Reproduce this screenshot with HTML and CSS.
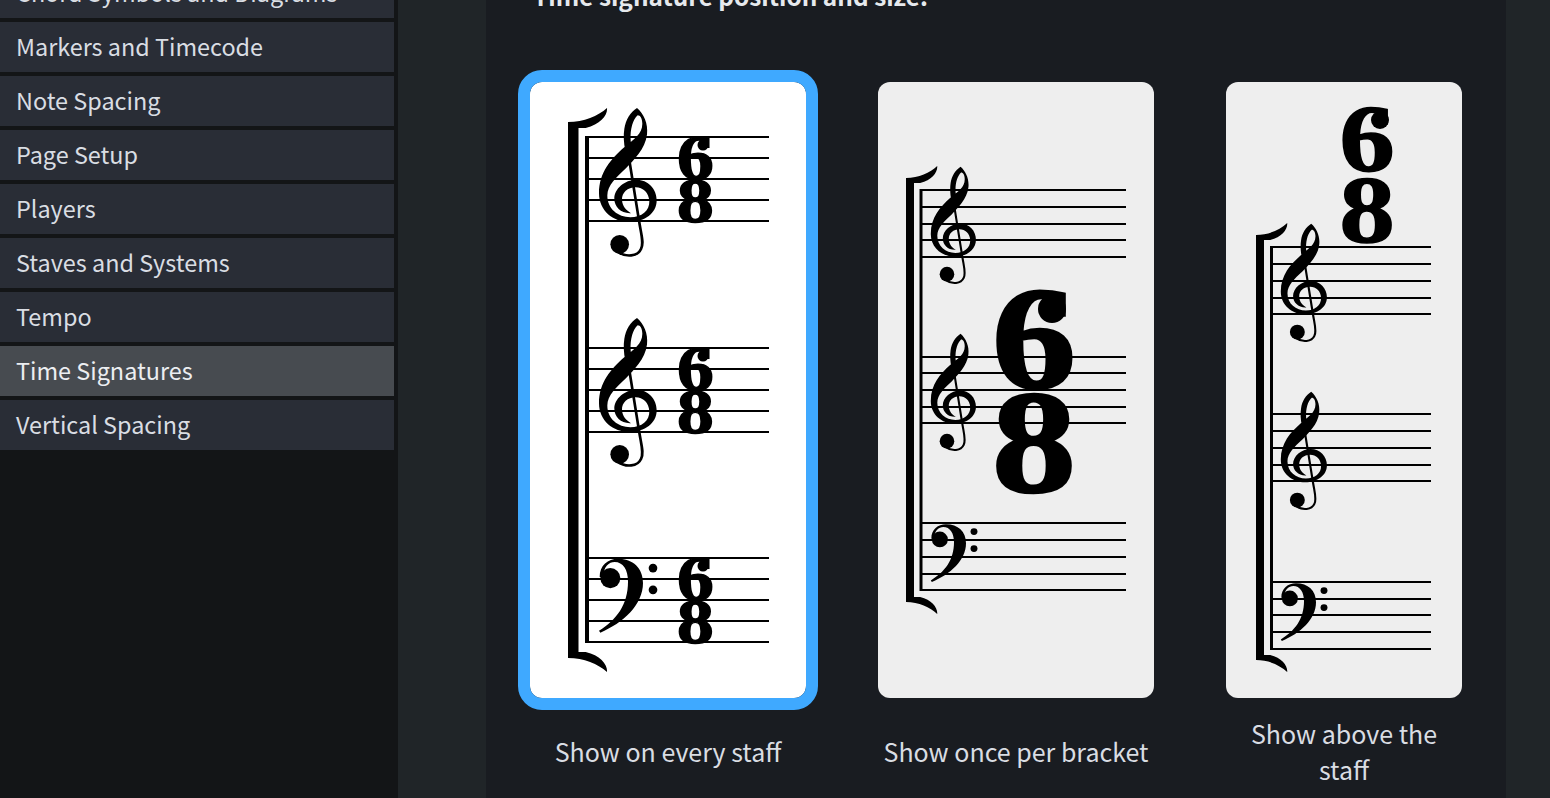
FILE: index.html
```html
<!DOCTYPE html>
<html lang="en">
<head>
<meta charset="utf-8">
<title>Engraving Options</title>
<link rel="stylesheet" href="styles.css">
</head>
<body>
<svg class="sprite" aria-hidden="true">
  <symbol id="treble" viewBox="265 140 180 452" preserveAspectRatio="none">
    <path d="M382 143C402 160 416 190 412 222C407 266 372 298 348 324C320 350 293 374 293 405C293 445 325 470 362 470C396 470 420 450 419 422C418 396 400 380 378 380C354 380 336 396 337 418C338 438 350 450 364 458C335 460 314 440 314 415C314 385 345 358 380 358C415 358 441 385 441 420C441 458 405 484 360 484C310 484 268 450 268 398C268 335 305 295 342 262C372 236 398 222 398 190C398 175 392 165 384 165C370 178 361 205 363 240L365 262L347 272C342 245 341 225 344 205C348 178 362 156 382 143Z"/>
    <path class="stem" d="M353 262L388 480C394 520 404 548 394 565C384 587 350 592 322 572"/>
    <circle cx="330" cy="551" r="28"/>
  </symbol>
  <symbol id="bass" viewBox="115 52 180 230" preserveAspectRatio="none">
    <path d="M120 112C120 76 145 57 175 57C220 57 250 85 250 130C250 195 190 250 122 278L118 272C170 240 205 195 205 125C205 90 190 67 165 67C148 67 132 80 130 112Z"/>
    <circle cx="152" cy="115" r="30"/>
    <circle cx="280" cy="85" r="13"/>
    <circle cx="280" cy="150" r="13"/>
  </symbol>
  <symbol id="bracket-top" viewBox="0 0 40 20" preserveAspectRatio="none">
    <path d="M0 14C16 14 30 8 39 0C40 8 30 20 10 21L10 20H0Z"/>
  </symbol>
  <symbol id="bracket-bottom" viewBox="0 0 40 20" preserveAspectRatio="none">
    <path d="M0 6C16 6 30 12 39 20C40 12 30 0 10 -1L10 0H0Z"/>
  </symbol>
</svg>

<aside class="sidebar">
  <ul class="nav">
    <li class="nav-item">Chord Symbols and Diagrams</li>
    <li class="nav-item">Markers and Timecode</li>
    <li class="nav-item">Note Spacing</li>
    <li class="nav-item">Page Setup</li>
    <li class="nav-item">Players</li>
    <li class="nav-item">Staves and Systems</li>
    <li class="nav-item">Tempo</li>
    <li class="nav-item active">Time Signatures</li>
    <li class="nav-item">Vertical Spacing</li>
  </ul>
</aside>

<main class="main">
  <section class="panel">
    <h2 class="heading">Time signature position and size:</h2>
    <div class="options">

      <figure class="option wide">
        <div class="card selected">
          <svg class="score" width="276" height="616" viewBox="530 82 276 616">
            <rect x="568" y="122" width="10.5" height="535"/>
            <use href="#bracket-top" x="568" y="108" width="40" height="20"/>
            <use href="#bracket-bottom" x="568" y="652" width="40" height="20"/>
            <rect x="585" y="136" width="4" height="507"/>
            <path class="staff" d="M589 137H769M589 158H769M589 179H769M589 200H769M589 221H769"/>
            <path class="staff" d="M589 348H769M589 369H769M589 390H769M589 411H769M589 432H769"/>
            <path class="staff" d="M589 558H769M589 579H769M589 600H769M589 621H769M589 642H769"/>
            <use href="#treble" x="598" y="107" width="60" height="151"/>
            <use href="#treble" x="598" y="317" width="60" height="151"/>
            <use href="#bass" x="598" y="557" width="60" height="77"/>
            <text class="digit d-small" transform="translate(695.5 178.5) scale(1.15 1)">6</text>
            <circle cx="703" cy="145" r="5.5"/>
            <text class="digit d-small" transform="translate(695.5 221.5) scale(1.15 1)">8</text>
            <text class="digit d-small" transform="translate(695.5 389.5) scale(1.15 1)">6</text>
            <circle cx="703" cy="356" r="5.5"/>
            <text class="digit d-small" transform="translate(695.5 432.5) scale(1.15 1)">8</text>
            <text class="digit d-small" transform="translate(695.5 599.5) scale(1.15 1)">6</text>
            <circle cx="703" cy="566" r="5.5"/>
            <text class="digit d-small" transform="translate(695.5 642.5) scale(1.15 1)">8</text>
          </svg>
        </div>
        <figcaption class="caption">Show on every staff</figcaption>
      </figure>

      <figure class="option wide">
        <div class="card">
          <svg class="score" width="276" height="616" viewBox="878 82 276 616">
            <rect x="906" y="178" width="8" height="423"/>
            <use href="#bracket-top" x="906" y="166" width="32" height="17"/>
            <use href="#bracket-bottom" x="906" y="597" width="32" height="17"/>
            <rect x="919.5" y="189" width="3" height="402"/>
            <path class="staff" d="M922 190H1126M922 207H1126M922 224H1126M922 240H1126M922 257H1126"/>
            <path class="staff" d="M922 357H1126M922 373H1126M922 390H1126M922 407H1126M922 423H1126"/>
            <path class="staff" d="M922 523H1126M922 540H1126M922 557H1126M922 574H1126M922 590H1126"/>
            <use href="#treble" x="930" y="166" width="47" height="119"/>
            <use href="#treble" x="930" y="333" width="47" height="119"/>
            <use href="#bass" x="930" y="523" width="48" height="60"/>
            <text class="digit d-large" transform="translate(1034 388) scale(1.15 1)">6</text>
            <circle cx="1052" cy="309" r="14"/>
            <text class="digit d-large" transform="translate(1034 492) scale(1.15 1)">8</text>
          </svg>
        </div>
        <figcaption class="caption">Show once per bracket</figcaption>
      </figure>

      <figure class="option narrow">
        <div class="card">
          <svg class="score" width="236" height="616" viewBox="1226 82 236 616">
            <rect x="1256" y="235" width="8" height="425"/>
            <use href="#bracket-top" x="1256" y="223" width="32" height="17"/>
            <use href="#bracket-bottom" x="1256" y="655" width="32" height="17"/>
            <rect x="1270" y="246" width="3" height="404"/>
            <path class="staff" d="M1273 247H1431M1273 264H1431M1273 281H1431M1273 298H1431M1273 314H1431"/>
            <path class="staff" d="M1273 414H1431M1273 431H1431M1273 448H1431M1273 465H1431M1273 481H1431"/>
            <path class="staff" d="M1273 582H1431M1273 599H1431M1273 615H1431M1273 632H1431M1273 649H1431"/>
            <use href="#treble" x="1280" y="223" width="48" height="120"/>
            <use href="#treble" x="1280" y="391" width="48" height="120"/>
            <use href="#bass" x="1280" y="582" width="48" height="60"/>
            <text class="digit d-mid" transform="translate(1367 171) scale(1.15 1)">6</text>
            <circle cx="1380" cy="120" r="9"/>
            <text class="digit d-mid" transform="translate(1367 242) scale(1.15 1)">8</text>
          </svg>
        </div>
        <figcaption class="caption caption-narrow">Show above the staff</figcaption>
      </figure>

    </div>
  </section>
</main>
</body>
</html>
```

FILE: styles.css
```css
* { box-sizing: border-box; }

html, body {
  margin: 0;
  height: 798px;
  overflow: hidden;
}

body {
  display: flex;
  background: #202528;
  color: #d9dde3;
  font-family: "Noto Sans CJK SC", "Noto Sans", sans-serif;
}

.sprite {
  position: absolute;
  width: 0;
  height: 0;
}

.sidebar {
  flex: 0 0 398px;
  height: 798px;
  padding-right: 4px;
  background: #131517;
  overflow: hidden;
}

.nav {
  list-style: none;
  margin: -32px 0 0;
  padding: 0;
  display: flex;
  flex-direction: column;
  gap: 4px;
}

.nav-item {
  height: 50px;
  padding: 0 0 2px 16px;
  display: flex;
  align-items: center;
  background: #292d36;
  font-size: 23.4px;
  line-height: 36px;
}

.nav-item.active {
  background: #474b50;
  color: #eceef1;
}

.main {
  flex: 1;
  padding: 0 44px 0 88px;
  height: 798px;
  overflow: hidden;
}

.panel {
  height: 838px;
  margin-top: -40px;
  padding: 0 32px;
  background: #191c21;
}

.heading {
  margin: 0 0 64px;
  padding: 18px 0 0 15px;
  height: 46px;
  font-size: 24.4px;
  line-height: 36px;
  font-weight: 700;
  color: #e6e9ed;
  white-space: nowrap;
}

.options {
  display: flex;
  gap: 48px;
}

.option {
  margin: 0;
  display: flex;
  flex-direction: column;
}

.wide { width: 300px; }
.narrow { width: 260px; }

.card {
  height: 640px;
  border: 12px solid transparent;
  border-radius: 24px;
  background: #eeeeee;
  background-clip: padding-box;
  overflow: hidden;
}

.card.selected {
  border-color: #3fa9ff;
  background: #ffffff;
  background-clip: padding-box;
}

.score { display: block; }

.staff {
  fill: none;
  stroke: #000;
  stroke-width: 2;
}

.stem {
  fill: none;
  stroke: #000;
  stroke-width: 8;
}

.digit {
  font-family: "Liberation Serif", serif;
  font-weight: 700;
  text-anchor: middle;
  fill: #000;
  stroke: #000;
}
.d-small { font-size: 64px; stroke-width: 1.4; }
.d-mid { font-size: 96px; stroke-width: 1.5; }
.d-large { font-size: 146px; stroke-width: 2.5; }

.caption {
  margin-top: 5px;
  min-height: 72px;
  display: flex;
  align-items: center;
  justify-content: center;
  text-align: center;
  font-size: 25px;
  line-height: 36px;
}

.caption-narrow { padding: 0 24px; }
```
